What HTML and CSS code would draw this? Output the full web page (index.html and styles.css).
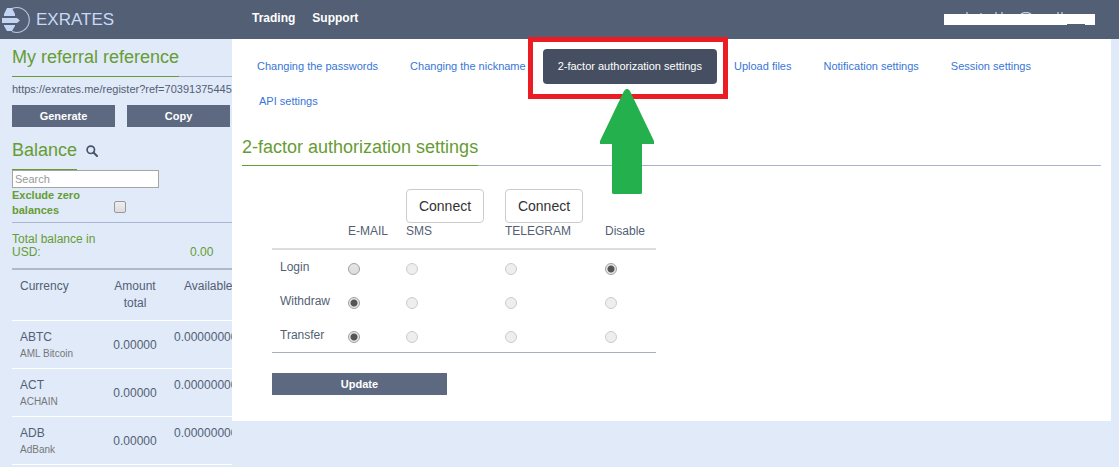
FILE: index.html
```html
<!DOCTYPE html>
<html lang="en">
<head>
<meta charset="utf-8">
<title>Exrates – 2-factor authorization settings</title>
<link rel="stylesheet" href="styles.css">
</head>
<body>
<header class="topbar">
  <a class="brand" href="#">
    <svg class="brand-mark" width="30" height="28" viewBox="0 0 30 28" aria-hidden="true">
      <path d="M11 2.6A12.4 12.4 0 1 1 11 25.4" fill="none" stroke="#b9c9e6" stroke-width="1.1"/>
      <path d="M6 2h5l3 6v2H3V8zM1 12h15l3 2.5-3 2.5H1zM3 19h11v1l-3 5H6l-3-5z" fill="#c3d5f2"/>
    </svg>
    <span>EXRATES</span>
  </a>
  <nav class="menu">
    <a href="#">Trading</a>
    <a href="#">Support</a>
  </nav>
  <svg class="account" width="151" height="13" viewBox="0 0 151 13" role="img" aria-label="Account, hidden">
    <path d="M23 0v2M37 1v1M52 0v2M58 0v2M114 0v2M118 0v2M77 2q5-3 10 0" fill="none" stroke="#c3cede" stroke-width="1.3"/>
    <path d="M0 2h151v11h-10v-1h-18v1H0z" fill="#fff"/>
  </svg>
</header>
<div class="page">
  <aside class="sidebar">
    <h2 class="title"><span>My referral reference</span></h2>
    <p class="ref-link">https://exrates.me/register?ref=70391375445</p>
    <div class="ref-actions">
      <button class="btn" type="button">Generate</button>
      <button class="btn" type="button">Copy</button>
    </div>
    <h2 class="balance-title"><span>Balance</span>
      <svg width="12" height="12" viewBox="0 0 12 12" aria-hidden="true"><circle cx="4.8" cy="4.8" r="3.7" fill="none" stroke="#46546c" stroke-width="1.7"/><path d="M7.5 7.5l3.5 3.5" stroke="#46546c" stroke-width="2" stroke-linecap="round"/></svg>
    </h2>
    <input class="search" type="text" placeholder="Search" aria-label="Search">
    <div class="exclude">
      <label for="zero">Exclude zero balances</label>
      <input class="check" id="zero" type="checkbox">
    </div>
    <div class="total"><span class="total-label">Total balance in USD:</span><span>0.00</span></div>
    <table class="currencies">
      <thead><tr><th class="name">Currency</th><th class="amount">Amount total</th><th class="available">Available</th></tr></thead>
      <tbody>
        <tr><td class="name">ABTC<small>AML Bitcoin</small></td><td class="amount">0.00000</td><td class="available">0.00000000</td></tr>
        <tr><td class="name">ACT<small>ACHAIN</small></td><td class="amount">0.00000</td><td class="available">0.00000000</td></tr>
        <tr><td class="name">ADB<small>AdBank</small></td><td class="amount">0.00000</td><td class="available">0.00000000</td></tr>
      </tbody>
    </table>
  </aside>
  <main class="content">
    <ul class="tabs">
      <li><a href="#">Changing the passwords</a></li>
      <li><a href="#">Changing the nickname</a></li>
      <li class="current"><a href="#" aria-current="page">2-factor authorization settings</a>
        <span class="frame"></span>
        <svg class="arrow" width="54" height="106" viewBox="0 0 54 106" aria-hidden="true"><path d="M26 0h2l2 2 24 50v3H42v49l-1 1H13l-1-1V55H0v-3L24 2z" fill="#24b14d"/></svg>
      </li>
      <li><a href="#">Upload files</a></li>
      <li><a href="#">Notification settings</a></li>
      <li><a href="#">Session settings</a></li>
      <li><a href="#">API settings</a></li>
    </ul>
    <h1 class="title"><span>2-factor authorization settings</span></h1>
    <form class="factors">
      <table class="options">
        <thead>
          <tr>
            <th class="action"></th>
            <th class="email">E-MAIL</th>
            <th class="sms"><button class="connect" type="button">Connect</button>SMS</th>
            <th class="telegram"><button class="connect" type="button">Connect</button>TELEGRAM</th>
            <th class="disable">Disable</th>
          </tr>
        </thead>
        <tbody>
          <tr><td>Login</td>
            <td><input type="radio" name="login" aria-label="Login: e-mail"></td>
            <td><input type="radio" name="login" aria-label="Login: SMS" disabled></td>
            <td><input type="radio" name="login" aria-label="Login: Telegram" disabled></td>
            <td><input type="radio" name="login" aria-label="Login: disable" checked></td></tr>
          <tr><td>Withdraw</td>
            <td><input type="radio" name="withdraw" aria-label="Withdraw: e-mail" checked></td>
            <td><input type="radio" name="withdraw" aria-label="Withdraw: SMS" disabled></td>
            <td><input type="radio" name="withdraw" aria-label="Withdraw: Telegram" disabled></td>
            <td><input type="radio" name="withdraw" aria-label="Withdraw: disable" disabled></td></tr>
          <tr><td>Transfer</td>
            <td><input type="radio" name="transfer" aria-label="Transfer: e-mail" checked></td>
            <td><input type="radio" name="transfer" aria-label="Transfer: SMS" disabled></td>
            <td><input type="radio" name="transfer" aria-label="Transfer: Telegram" disabled></td>
            <td><input type="radio" name="transfer" aria-label="Transfer: disable" disabled></td></tr>
        </tbody>
      </table>
      <button class="btn update" type="button">Update</button>
    </form>
  </main>
</div>
</body>
</html>
```
FILE: styles.css
```css
* { box-sizing: border-box; }
body {
  margin: 0;
  background: #e0eaf9;
  color: #535f74;
  font: 12px/17px "Liberation Sans", Arial, sans-serif;
}
a { text-decoration: none; }
button, input { font-family: inherit; margin: 0; }
table { border-collapse: separate; border-spacing: 0; table-layout: fixed; }
th { font-weight: normal; }

.topbar {
  display: flex;
  align-items: center;
  height: 39px;
  padding-right: 24px;
  background: #535f74;
}
.brand {
  display: flex;
  align-items: center;
  gap: 5px;
  width: 252px;
  color: #c9d9f4;
  font-size: 17px;
}
.brand-mark { margin-left: 1px; }
.menu { display: flex; gap: 17px; padding-bottom: 3px; }
.menu a { color: #fff; font-weight: bold; }
.account { margin-left: auto; margin-bottom: 2px; }

.page { display: flex; align-items: flex-start; }
.sidebar {
  flex: 0 0 232px;
  padding-left: 12px;
  overflow: hidden;
}
.title {
  display: flex;
  margin: 0;
  box-shadow: inset 0 -1px #a9b3cb;
  color: #669c33;
  font-size: 18px;
  font-weight: normal;
  line-height: 37px;
}
.title span { border-bottom: 1px solid #669c33; }
.content .title { padding-top: 3px; }
.content .title span { line-height: 35px; }
.ref-link { margin: 4px 0 7px; font-size: 11px; white-space: nowrap; }
.ref-actions { display: flex; gap: 12px; padding-right: 2px; }
.btn {
  flex: 1;
  height: 22px;
  padding: 0;
  border: 0;
  background: #5c6980;
  color: #fff;
  font-size: 11px;
  font-weight: bold;
}
.balance-title {
  display: flex;
  align-items: center;
  gap: 9px;
  margin: 5px 0 0;
  color: #669c33;
  font-size: 18px;
  font-weight: normal;
  line-height: 37px;
}
.balance-title span { border-bottom: 1px solid #669c33; }
.search {
  display: block;
  width: 147px;
  height: 18px;
  padding: 0 2px;
  border: 1px solid #a5a5a5;
  background: #fff;
  font-size: 11px;
}
.search::placeholder { color: #999; }
.exclude {
  display: flex;
  align-items: flex-end;
  gap: 12px;
  padding-bottom: 4px;
  border-bottom: 1px solid #a9b7d2;
  color: #669c33;
  font-size: 11px;
  font-weight: bold;
  line-height: 15px;
}
.exclude label { width: 90px; }
.check {
  appearance: none;
  width: 12px;
  height: 12px;
  margin-bottom: 5px;
  border: 1px solid #999;
  border-radius: 2px;
  background: linear-gradient(#eee, #ddd);
}
.total {
  display: flex;
  align-items: flex-end;
  gap: 88px;
  padding: 10px 0 9px;
  color: #669c33;
  line-height: 13px;
}
.total-label { width: 90px; }
.currencies { width: 240px; border-top: 2px solid #b0b9c9; }
.currencies th { padding: 8px 0; border-bottom: 1px solid #fff; vertical-align: top; }
.currencies td { height: 48px; padding: 8px 0 7px; border-bottom: 1px solid #fff; }
.currencies .name { width: 94px; padding-left: 8px; text-align: left; }
.currencies .amount { width: 58px; text-align: center; vertical-align: middle; }
.currencies .available { width: 88px; padding-left: 10px; text-align: left; vertical-align: top; }
.currencies th.available { padding-left: 20px; }
.currencies small { display: block; color: #777; font-size: 10px; line-height: 15px; }

.content {
  flex: 1;
  margin-right: 8px;
  padding: 10px 10px 26px;
  background: #fff;
}
.tabs {
  display: flex;
  flex-wrap: wrap;
  margin: 0 0 8px;
  padding: 0;
  list-style: none;
}
.tabs li { position: relative; }
.tabs li + li { margin-left: 2px; }
.tabs a {
  display: block;
  padding: 9px 15px;
  border-radius: 4px;
  color: #3876d6;
  font-size: 11px;
}
.tabs .current a { background: #454f61; color: #fff; }
.frame {
  position: absolute;
  inset: -12px -11px -15px -15px;
  border: 5px solid #ec1c24;
  pointer-events: none;
}
.arrow { position: absolute; top: 40px; left: 57px; z-index: 1; pointer-events: none; }
.factors { padding: 23px 30px 0; }
.options { width: 384px; border-bottom: 1px solid #a9afc2; }
.options th { padding: 0 8px 8px; border-bottom: 2px solid #ddd; text-align: left; vertical-align: bottom; }
.options td { height: 34px; padding: 0 8px; }
.options .action { width: 68px; }
.options .email { width: 58px; }
.options .sms { width: 99px; }
.options .telegram { width: 100px; }
.connect {
  display: block;
  width: 78px;
  height: 34px;
  padding: 0;
  border: 1px solid #ccc;
  border-radius: 4px;
  background: #fff;
  color: #333;
  font-size: 14px;
}
.options input {
  appearance: none;
  display: block;
  width: 12px;
  height: 12px;
  margin-top: 4px;
  border: 1px solid #a0a0a0;
  border-radius: 50%;
  background: linear-gradient(#e6e6e6, #ddd);
}
.options input:checked { background: radial-gradient(circle, #555 0 3px, #e6e6e6 4px); }
.options input:disabled { border-color: #ccc; background: #eee; }
.update { display: block; width: 175px; margin-top: 20px; }
```
